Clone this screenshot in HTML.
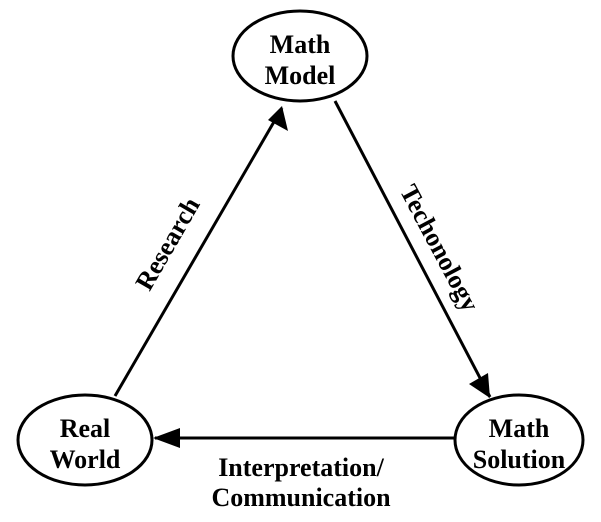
<!DOCTYPE html>
<html><head><style>body{margin:0;background:#fff}</style></head><body>
<svg width="601" height="517" viewBox="0 0 601 517" xmlns="http://www.w3.org/2000/svg" font-family="Liberation Serif, serif" font-weight="bold" font-size="26" text-anchor="middle">
<defs></defs>
<g fill="none" stroke="#000" stroke-width="3">
<ellipse cx="300" cy="56" rx="67" ry="45"/>
<ellipse cx="85" cy="440" rx="67" ry="45"/>
<ellipse cx="519" cy="440" rx="64" ry="45"/>
<line x1="115" y1="396" x2="282" y2="108"/>
<line x1="335" y1="101" x2="490" y2="397"/>
<line x1="455" y1="438" x2="155" y2="438"/>
</g>
<path d="M282 106L288 131L268 120z"/>
<path d="M490 398L469 384L488 373z"/>
<path d="M153 438L180 428L180 448z"/>
<text x="300" y="53">Math</text><text x="300" y="84">Model</text>
<text x="85" y="437">Real</text><text x="85" y="468">World</text>
<text x="519" y="437">Math</text><text x="519" y="468">Solution</text>
<text x="301" y="476">Interpretation/</text><text x="301" y="506">Communication</text>
<text transform="translate(175,248) rotate(-60)">Research</text>
<text transform="translate(432,252) rotate(62)">Techonology</text>
</svg>
</body></html>
